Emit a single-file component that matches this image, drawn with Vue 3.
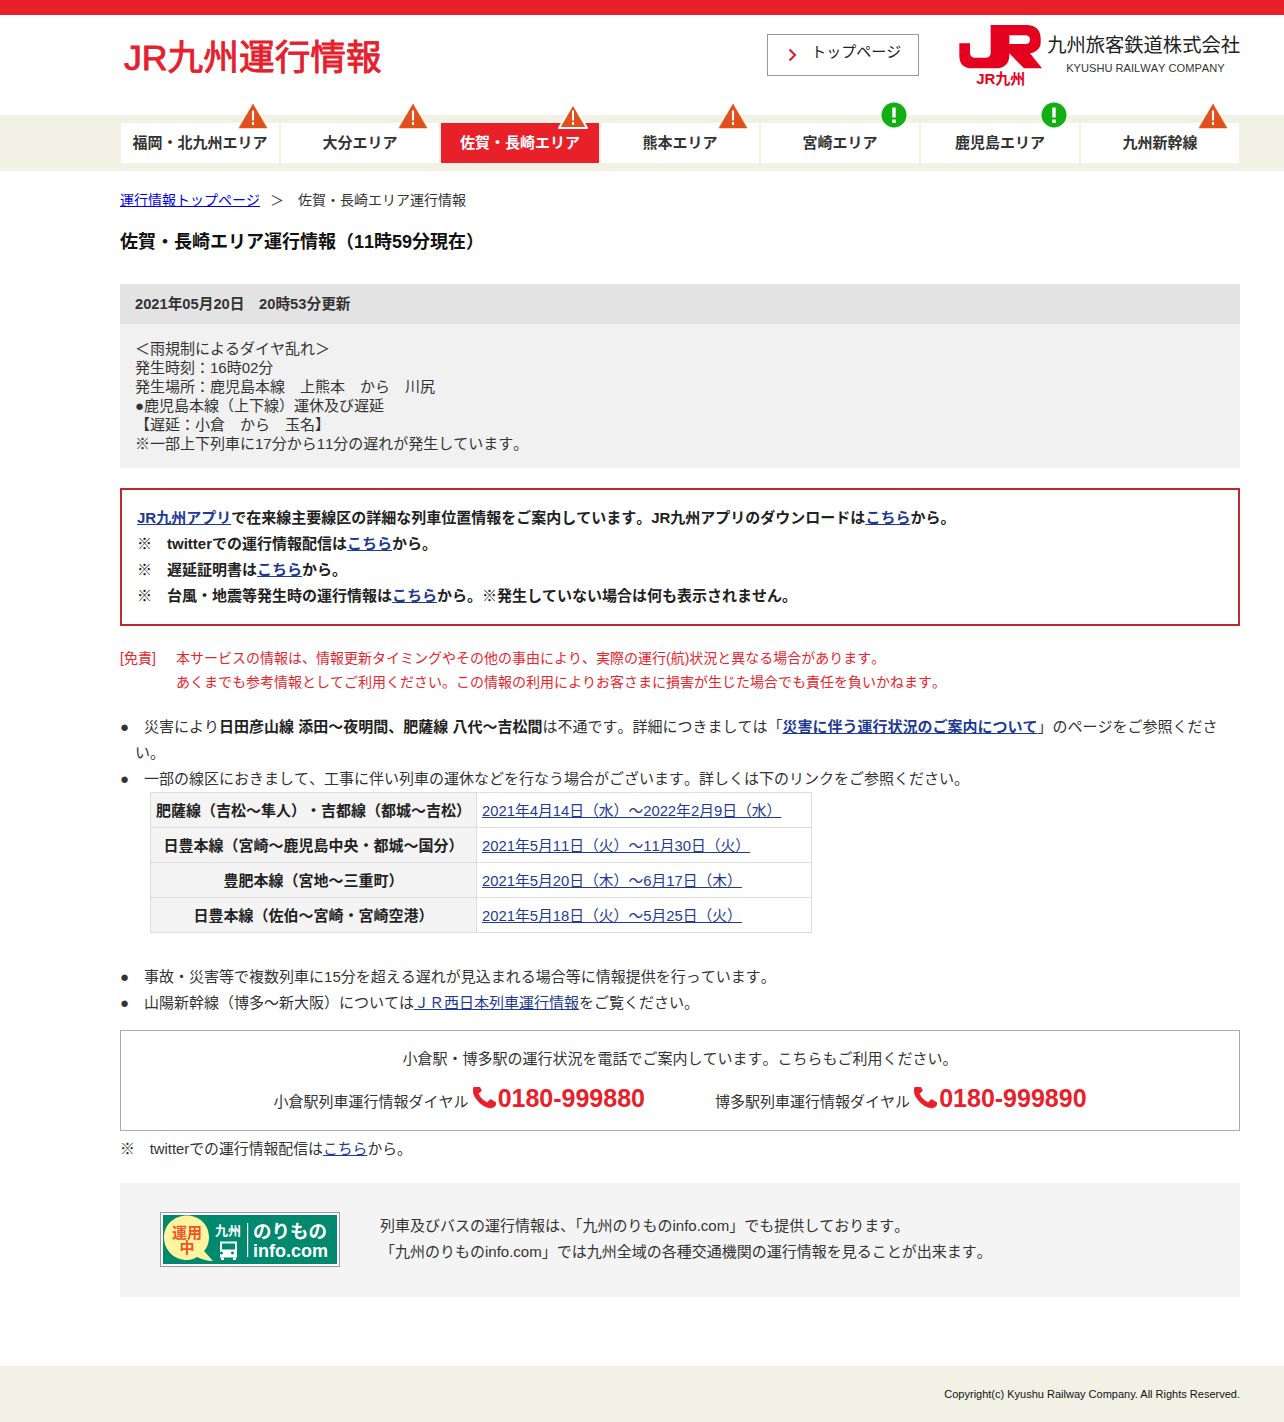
<script setup>
const areas = [
  { name: '福岡・北九州エリア', status: 'warn' },
  { name: '大分エリア', status: 'warn' },
  { name: '佐賀・長崎エリア', status: 'warn', active: true },
  { name: '熊本エリア', status: 'warn' },
  { name: '宮崎エリア', status: 'ok' },
  { name: '鹿児島エリア', status: 'ok' },
  { name: '九州新幹線', status: 'warn' },
]
const rows = [
  ['肥薩線（吉松～隼人）・吉都線（都城～吉松）', '2021年4月14日（水）～2022年2月9日（水）'],
  ['日豊本線（宮崎～鹿児島中央・都城～国分）', '2021年5月11日（火）～11月30日（火）'],
  ['豊肥本線（宮地～三重町）', '2021年5月20日（木）～6月17日（木）'],
  ['日豊本線（佐伯～宮崎・宮崎空港）', '2021年5月18日（火）～5月25日（火）'],
]
const phonePath = 'M1600 1240q0 27-10 70.5t-21 68.5q-21 50-122 106-94 51-186 51-27 0-53-3.5t-57.5-12.5-47-14.5-55.5-20.5-49-18q-98-35-175-83-127-79-264-216t-216-264q-48-77-83-175-3-9-18-49t-20.5-55.5-14.5-47-12.5-57.5-3.5-53q0-92 51-186 56-101 106-122 25-11 68.5-21t70.5-10q14 0 21 3 18 6 53 76 11 19 30 54t35 63.5 31 53.5q3 4 17.5 25t21.5 35.5 7 28.5q0 20-28.5 50t-62 55-62 53-28.5 46q0 9 5 22.5t8.5 20.5 14 24 11.5 19q76 137 174 235t235 174q2 1 19 11.5t24 14 20.5 8.5 22.5 5q18 0 46-28.5t53-62 55-62 50-28.5q14 0 28.5 7t35.5 21.5 25 17.5q25 15 53.5 31t63.5 35 54 30q70 35 76 53 3 7 3 21z'
</script>

<template>
  <div class="page">
    <div class="topbar"></div>
    <header class="head wrap">
      <h1 class="site-title">JR九州運行情報</h1>
      <a class="top-btn">
        <svg class="chev" width="9" height="14" viewBox="0 0 9 14"><path d="M1.5 1.5 7 7l-5.500 5.500" fill="none" stroke="#e8202a" stroke-width="2.200"/></svg>
        <span>トップページ</span>
      </a>
      <div class="logo">
        <div class="mark">
          <svg width="84" height="47" viewBox="24 12 252 141">
            <path fill="#e60020" fill-rule="evenodd" d="M122 15H230C258 15 272 32 272 55V68C272 84 260 96 240 100L276 145H222L178 100V105C178 132 162 145 138 145H66C42 145 28 132 28 108V70H60V98C60 108 66 113 76 113H106C116 113 122 108 122 98ZM178 46V72H226C235 72 240 67 240 59C240 51 235 46 226 46Z"/>
          </svg>
          <span class="mark-label">JR九州</span>
        </div>
        <div class="corp">
          <div class="corp-ja">九州旅客鉄道株式会社</div>
          <div class="corp-en">KYUSHU RAILWAY COMPANY</div>
        </div>
      </div>
    </header>

    <nav class="band">
      <ul class="nav wrap">
        <li v-for="a in areas" :key="a.name" class="nav-item" :class="{ active: a.active }">
          {{ a.name }}
          <svg v-if="a.status === 'warn'" class="badge tri" width="32" height="28" viewBox="0 0 32 28">
            <path d="M16 2 30 26H2Z" fill="#e0501c" :stroke="a.active ? '#fff' : '#e0501c'" :stroke-width="a.active ? 2 : 0.500" stroke-linejoin="round"/>
            <path d="M16 8.500v10M16 20v3" stroke="#fff" stroke-width="2" fill="none"/>
          </svg>
          <svg v-else class="badge dot" width="26" height="26" viewBox="0 0 26 26">
            <circle cx="13" cy="13" r="12.500" fill="#13ae13"/>
            <path d="M13 5.500v10M13 17.500v3.500" stroke="#fff" stroke-width="3.400" fill="none"/>
          </svg>
        </li>
      </ul>
    </nav>

    <main class="wrap main">
      <p class="crumb"><a class="crumb-link">運行情報トップページ</a><span class="crumb-sep">＞</span>佐賀・長崎エリア運行情報</p>
      <h2 class="page-title">佐賀・長崎エリア運行情報（11時59分現在）</h2>

      <section class="update">
        <div class="update-head">2021年05月20日　20時53分更新</div>
        <div class="update-body">
          ＜雨規制によるダイヤ乱れ＞<br>
          発生時刻：16時02分<br>
          発生場所：鹿児島本線　上熊本　から　川尻<br>
          ●鹿児島本線（上下線）運休及び遅延<br>
          【遅延：小倉　から　玉名】<br>
          ※一部上下列車に17分から11分の遅れが発生しています。
        </div>
      </section>

      <section class="notice">
        <p><a class="lnk">JR九州アプリ</a>で在来線主要線区の詳細な列車位置情報をご案内しています。JR九州アプリのダウンロードは<a class="lnk">こちら</a>から。</p>
        <p>※　twitterでの運行情報配信は<a class="lnk">こちら</a>から。</p>
        <p>※　遅延証明書は<a class="lnk">こちら</a>から。</p>
        <p>※　台風・地震等発生時の運行情報は<a class="lnk">こちら</a>から。※発生していない場合は何も表示されません。</p>
      </section>

      <dl class="disclaimer">
        <dt>[免責]</dt>
        <dd>本サービスの情報は、情報更新タイミングやその他の事由により、実際の運行(航)状況と異なる場合があります。<br>あくまでも参考情報としてご利用ください。この情報の利用によりお客さまに損害が生じた場合でも責任を負いかねます。</dd>
      </dl>

      <ul class="info">
        <li>●　災害により<b>日田彦山線 添田～夜明間、肥薩線 八代～吉松間</b>は不通です。詳細につきましては「<a class="lnk strong">災害に伴う運行状況のご案内について</a>」のページをご参照ください。</li>
        <li>●　一部の線区におきまして、工事に伴い列車の運休などを行なう場合がございます。詳しくは下のリンクをご参照ください。
          <table class="works">
            <tbody>
              <tr v-for="r in rows" :key="r[1]">
                <th>{{ r[0] }}</th>
                <td><a class="lnk">{{ r[1] }}</a></td>
              </tr>
            </tbody>
          </table>
        </li>
        <li>●　事故・災害等で複数列車に15分を超える遅れが見込まれる場合等に情報提供を行っています。</li>
        <li>●　山陽新幹線（博多～新大阪）については<a class="lnk">ＪＲ西日本列車運行情報</a>をご覧ください。</li>
      </ul>

      <section class="tel">
        <p class="tel-lead">小倉駅・博多駅の運行状況を電話でご案内しています。こちらもご利用ください。</p>
        <div class="tel-row">
          <span class="tel-item">小倉駅列車運行情報ダイヤル
            <svg class="phone" width="23" height="23" viewBox="192 256 1408 1408"><path :d="phonePath" fill="#e8202a" stroke="#e8202a" stroke-width="50"/></svg><b>0180-999880</b></span>
          <span class="tel-item">博多駅列車運行情報ダイヤル
            <svg class="phone" width="23" height="23" viewBox="192 256 1408 1408"><path :d="phonePath" fill="#e8202a" stroke="#e8202a" stroke-width="50"/></svg><b>0180-999890</b></span>
        </div>
      </section>
      <p class="tw">※　twitterでの運行情報配信は<a class="lnk">こちら</a>から。</p>

      <section class="nori">
        <svg class="banner" width="180" height="55" viewBox="0 0 180 55">
          <rect x="0.500" y="0.500" width="179" height="54" fill="#fff" stroke="#999"/>
          <rect x="3" y="3" width="174" height="49" fill="#00896e"/>
          <path d="M27 3.500C39.500 3.500 49 13 49 25C49 31 47 36 44 39L53 49C47 49 41 47 37 45C34 47 31 48 27 48C14 48 4 38 4 25.500C4 13 14 3.500 27 3.500Z" fill="#fff5a0"/>
          <text x="27" y="26" text-anchor="middle" class="b-un">運用</text>
          <text x="27" y="41" text-anchor="middle" class="b-un">中</text>
          <text x="68" y="23" text-anchor="middle" class="b-ky">九州</text>
          <g fill="#fff">
            <path fill-rule="evenodd" d="M60 29.500h17v16h-17ZM62 31.500v6h13v-6ZM63 41a1.500 1.500 0 1 0 0 .01ZM74 41a1.500 1.500 0 1 0 0 .01Z"/>
            <rect x="61" y="45.500" width="3" height="2.500"/>
            <rect x="73" y="45.500" width="3" height="2.500"/>
            <rect x="87" y="11" width="1.200" height="34"/>
          </g>
          <text x="93" y="26" class="b-no">のりもの</text>
          <text x="93" y="45" class="b-in">info.com</text>
        </svg>
        <p class="nori-text">列車及びバスの運行情報は、「九州のりものinfo.com」でも提供しております。<br>「九州のりものinfo.com」では九州全域の各種交通機関の運行情報を見ることが出来ます。</p>
      </section>
    </main>

    <footer class="foot">
      <p class="wrap copy">Copyright(c) Kyushu Railway Company. All Rights Reserved.</p>
    </footer>
  </div>
</template>

<style>
html, body { margin: 0; background: #fff; }
</style>

<style scoped>
.page {
  position: relative;
  width: 1284px;
  height: 1422px;
  overflow: hidden;
  font-family: "Liberation Sans", "Noto Sans CJK JP", sans-serif;
  font-size: 15px;
  color: #333;
  font-kerning: none;
  text-spacing-trim: space-all;
}
.wrap { box-sizing: border-box; width: 1120px; margin-left: 120px; }
p, h1, h2, ul, dl, dd, dt { margin: 0; padding: 0; }
ul { list-style: none; }
.topbar { height: 15px; background: #e8202a; }

.head { height: 100px; display: flex; }
.site-title {
  margin: 21px 0 0 4px;
  font-size: 35.700px;
  line-height: 44px;
  font-weight: 400;
  -webkit-text-stroke: 0.900px #e5202c;
  color: #e5202c;
  white-space: nowrap;
}
.top-btn {
  box-sizing: border-box;
  margin: 19px 0 0 auto;
  width: 152px;
  height: 42px;
  border: 1px solid #999;
  display: flex;
  color: #222;
  line-height: 34px;
  font-size: 15px;
}
.chev { margin: 13px 0 0 20px; }
.top-btn span { margin-left: 14px; }
.logo { margin: 9px 0 0 39px; display: flex; }
.mark { width: 89px; display: flex; flex-direction: column; }
.mark-label {
  margin: 0 0 0 18px;
  color: #e60020;
  font-size: 15px;
  line-height: 16px;
  font-weight: 700;
  white-space: nowrap;
}
.corp-ja { margin-top: 10px; font-size: 19.300px; line-height: 23px; color: #222; white-space: nowrap; }
.corp-en { margin: 4px 0 0 19px; font-size: 11.100px; line-height: 14px; color: #333; white-space: nowrap; }

.band { height: 56px; background: #f1f1e6; }
.nav { padding: 8px 0 0 1px; display: flex; gap: 2px; }
.nav-item {
  position: relative;
  width: 158px;
  height: 40px;
  background: #fff;
  text-align: center;
  font-weight: 700;
  line-height: 40px;
  color: #333;
}
.nav-item.active { background: #e8202a; color: #fff; }
.badge { position: absolute; }
.tri { left: 116px; top: -21px; }
.dot { left: 120px; top: -21px; }

.main { padding-top: 19px; }
.crumb { font-size: 14px; line-height: 20px; color: #333; }
.crumb-link { color: #0000ee; text-decoration: underline; }
.crumb-sep { margin: 0 14px 0 10px; }
.page-title { margin-top: 20px; font-size: 18px; line-height: 24px; font-weight: 700; color: #111; }

.update { margin-top: 30px; }
.update-head { height: 40px; padding-left: 15px; background: #e3e3e3; line-height: 40px; font-size: 14.700px; font-weight: 700; }
.update-body { padding: 15px; background: #f1f1f1; line-height: 19px; }

.notice { margin-top: 20px; border: 2px solid #bb2a2e; padding: 15px; line-height: 26px; font-weight: 700; color: #222; }
.lnk { color: #1e3a94; text-decoration: underline; }

.disclaimer { margin-top: 20px; display: flex; font-size: 14px; line-height: 24px; color: #e5262e; }
.disclaimer dt { width: 56px; flex: none; }

.info { margin-top: 20px; line-height: 26px; width: 1100px; }
.info li { padding-left: 15px; text-indent: -15px; }
.info b { color: #222; }
.strong { font-weight: 700; }
.works {
  margin: 0 0 31px 15px;
  text-indent: 0;
  border-collapse: collapse;
  line-height: 20px;
}
.works th, .works td { height: 35px; box-sizing: border-box; padding: 1px 5px 0; border: 1px solid #ddd; }
.works th { width: 326px; background: #f4f4f4; text-align: center; color: #222; }
.works td { width: 335px; text-align: left; font-size: 14.800px; }

.tel { box-sizing: border-box; margin-top: 14px; height: 101px; border: 1px solid #aaa; text-align: center; }
.tel-lead { margin-top: 15px; line-height: 26px; }
.tel-row { margin-top: 6px; display: flex; justify-content: center; gap: 70px; line-height: 40px; }
.tel-item b { font-size: 25px; color: #e8202a; margin-left: 2px; }
.phone { vertical-align: -3px; }
.tw { margin-top: 5px; line-height: 26px; font-size: 14.850px; }

.nori { box-sizing: border-box; margin-top: 21px; height: 114px; padding: 29px 40px 0; background: #f4f4f4; display: flex; gap: 40px; }
.banner { flex: none; }
.nori-text { line-height: 26px; margin-top: 1px; text-spacing-trim: normal; }
.b-un { font-size: 15px; font-weight: 700; fill: #ef5326; }
.b-ky { font-size: 13px; font-weight: 700; fill: #fff; }
.b-no { font-size: 18.500px; font-weight: 700; fill: #fff; }
.b-in { font-size: 18px; font-weight: 700; fill: #fff; }

.foot { position: absolute; left: 0; top: 1366px; width: 100%; height: 56px; background: #f1f1e6; }
.copy { padding-top: 21px; font-size: 11px; line-height: 14px; text-align: right; color: #111; font-kerning: normal; }
</style>
